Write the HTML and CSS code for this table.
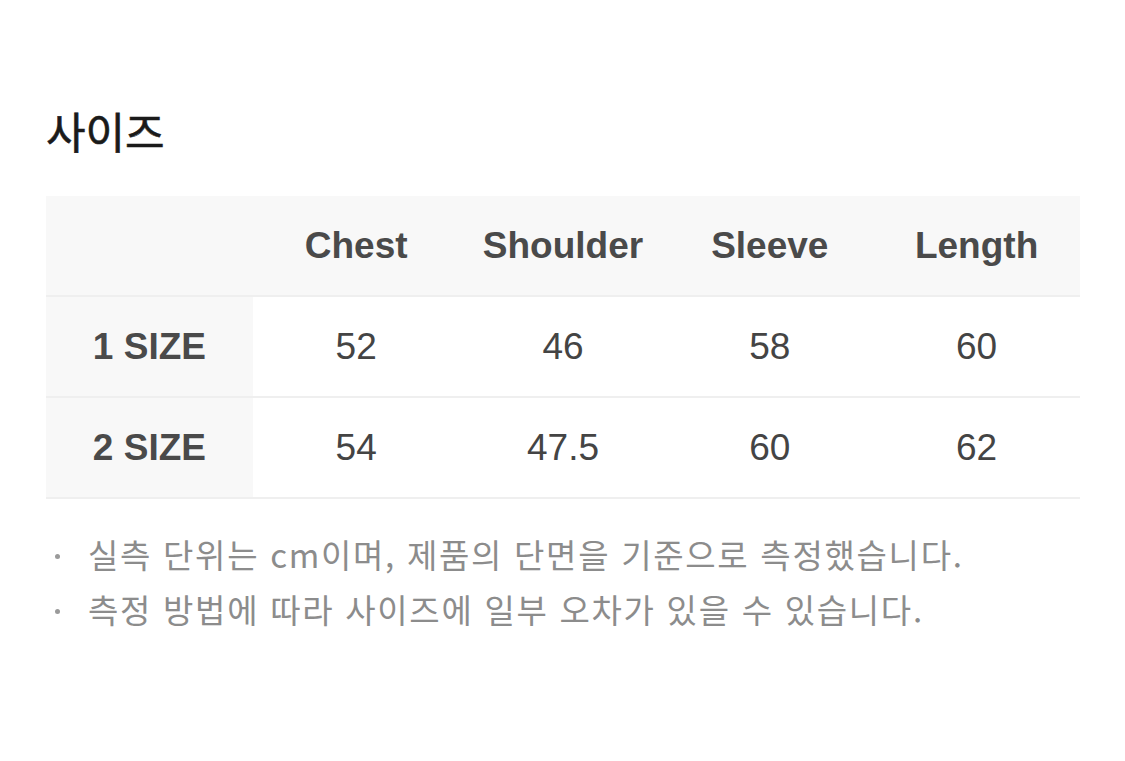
FILE: index.html
```html
<!DOCTYPE html>
<html lang="ko">
<head>
<meta charset="utf-8">
<title>사이즈</title>
<link rel="stylesheet" href="styles.css">
</head>
<body>
<section class="size-section">
  <h2 class="title">사이즈</h2>
  <table class="size-table">
    <thead>
      <tr>
        <th class="corner"></th>
        <th>Chest</th>
        <th>Shoulder</th>
        <th>Sleeve</th>
        <th>Length</th>
      </tr>
    </thead>
    <tbody>
      <tr>
        <th class="row-head">1 SIZE</th>
        <td>52</td>
        <td>46</td>
        <td>58</td>
        <td>60</td>
      </tr>
      <tr>
        <th class="row-head">2 SIZE</th>
        <td>54</td>
        <td>47.5</td>
        <td>60</td>
        <td>62</td>
      </tr>
    </tbody>
  </table>
  <ul class="notes">
    <li>실측 단위는 cm이며, 제품의 단면을 기준으로 측정했습니다.</li>
    <li>측정 방법에 따라 사이즈에 일부 오차가 있을 수 있습니다.</li>
  </ul>
</section>
</body>
</html>
```
FILE: styles.css
```css
html, body {
  margin: 0;
  padding: 0;
  background: #ffffff;
}

body {
  font-family: "Liberation Sans", "Noto Sans CJK KR", sans-serif;
  color: #444;
}

.size-section {
  padding: 100px 46px 0 46px;
}

.title {
  margin: 0 0 36px 0;
  font-family: "Noto Sans CJK KR", sans-serif;
  font-size: 43px;
  font-weight: 400;
  line-height: 60px;
  color: #1a1a1a;
  -webkit-text-stroke: 0.6px #1a1a1a;
}

.size-table {
  width: 1034px;
  border-collapse: collapse;
  table-layout: fixed;
}

.size-table th,
.size-table td {
  height: 99px;
  padding: 0;
  text-align: center;
  vertical-align: middle;
  font-size: 37px;
  color: #444;
  border-bottom: 2px solid #efefef;
}

.size-table thead th {
  background: #f8f8f8;
  font-weight: bold;
  color: #4a4a4a;
}

.size-table .row-head {
  background: #f8f8f8;
  font-weight: bold;
  color: #4a4a4a;
}

.size-table td {
  font-weight: normal;
  background: #fff;
}

.notes {
  list-style: none;
  margin: 28px 0 0 0;
  padding: 0;
  font-family: "Noto Sans CJK KR", sans-serif;
  font-size: 33px;
  line-height: 55px;
  color: #8c8c8c;
}

.notes li {
  position: relative;
  padding-left: 42px;
  letter-spacing: 1.7px;
}

.notes li::before {
  content: "";
  position: absolute;
  left: 9px;
  top: 27px;
  width: 5px;
  height: 5px;
  border-radius: 50%;
  background: #9a9a9a;
}
```
